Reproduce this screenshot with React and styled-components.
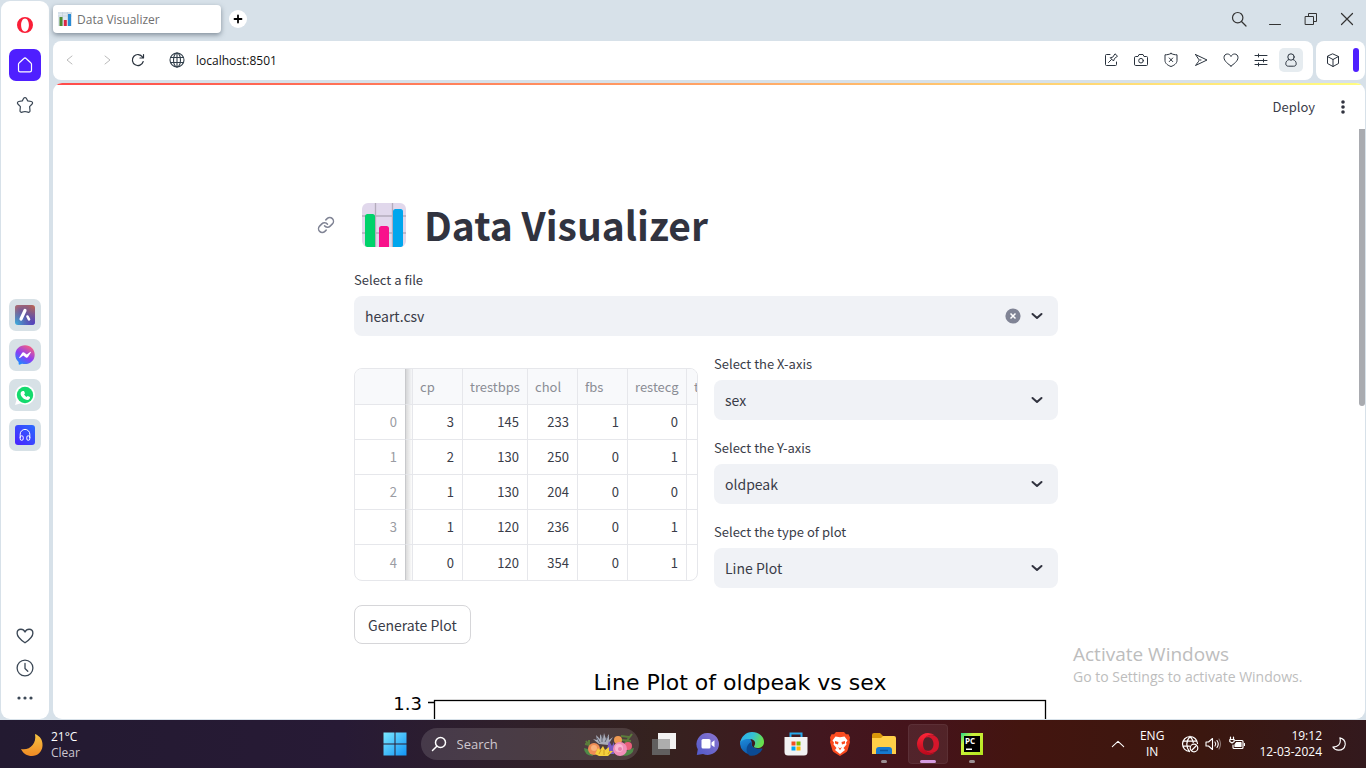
import React from "react";
import styled, { createGlobalStyle, css } from "styled-components";
import { FaFacebookMessenger } from "react-icons/fa";

const chromeFont = '"Open Sans", "Noto Sans", sans-serif';
const appFont = '"Noto Sans CJK JP", "Open Sans", sans-serif';

const GlobalStyle = createGlobalStyle`
  * { box-sizing: border-box; }
  body { margin: 0; overflow: hidden; font-family: ${chromeFont}; }
  button, input, select { font: inherit; color: inherit; margin: 0; padding: 0; border: 0; background: none; }
  svg { display: block; flex: none; }
`;

/* ---------- Desktop shell ---------- */
const Desktop = styled.div`
  height: 100vh;
  display: flex;
  flex-direction: column;
`;
const Browser = styled.div`
  flex: 1;
  min-height: 0;
  display: flex;
  gap: 4px;
  padding: 1px;
  background: #d7e1e9;
`;
const Sidebar = styled.nav`
  width: 48px;
  display: flex;
  flex-direction: column;
  justify-content: space-between;
  padding: 8px 0 11px;
  background: #fff;
  border-radius: 9px;
`;
const SideGroup = styled.div`
  display: flex;
  flex-direction: column;
  align-items: center;
  gap: 8px;
  padding-top: ${(p) => p.$top || 0}px;
`;
const SideButton = styled.button`
  width: 32px;
  height: ${(p) => p.$height || 32}px;
  display: grid;
  place-items: center;
  border-radius: 7px;
  color: #3c4856;
  background: ${(p) => p.$bg || "transparent"};
`;
const Main = styled.div`
  flex: 1;
  min-width: 0;
  display: flex;
  flex-direction: column;
`;
const TabBar = styled.div`
  height: 40px;
  display: flex;
  align-items: center;
  padding-bottom: 4px;
  gap: 8px;
`;
const Tab = styled.div`
  width: 168px;
  height: 28px;
  display: flex;
  align-items: center;
  gap: 5px;
  padding-left: 5px;
  background: #fff;
  border-radius: 4px;
  box-shadow: 0 2px 5px rgba(60, 75, 90, 0.55);
  font-size: 12px;
  color: #707070;
`;
const NewTab = styled.button`
  width: 18px;
  height: 18px;
  display: grid;
  place-items: center;
  border-radius: 50%;
  background: #fff;
`;
const WindowControls = styled.div`
  display: flex;
  margin-left: auto;
`;
const WindowButton = styled.button`
  width: 36px;
  height: 28px;
  display: grid;
  place-items: center;
  color: #333;
`;
const ToolRow = styled.div`
  display: flex;
  gap: 3px;
  height: 39px;
`;
const Toolbar = styled.div`
  flex: 1;
  display: flex;
  align-items: center;
  padding: 0 10px 1px 5px;
  background: #fff;
  border-radius: 8px;
`;
const CubeBox = styled.div`
  width: 49px;
  display: flex;
  align-items: center;
  gap: 8px;
  padding: 0 0 1px 5px;
  background: #fff;
  border-radius: 8px;
`;
const Accent = styled.span`
  width: 6px;
  height: 24px;
  border-radius: 3px;
  background: #4f1fff;
`;
const ToolButton = styled.button`
  width: ${(p) => p.$width || 24}px;
  height: 24px;
  display: grid;
  place-items: center;
  border-radius: 5px;
  color: ${(p) => (p.$muted ? "#bbb" : "#2a333e")};
  background: ${(p) => (p.$on ? "#e6ecf0" : "transparent")};
`;
const Address = styled.label`
  flex: 1;
  display: flex;
  align-items: center;
  gap: 11px;
  padding-left: 24px;
  color: #33404c;
`;
const AddressInput = styled.input`
  flex: 1;
  font-size: 12px;
  color: #111;
  outline: none;
`;
const Tools = styled.div`
  display: flex;
  gap: 6px;
`;

/* ---------- Web page ---------- */
const Page = styled.div`
  flex: 1;
  min-height: 0;
  margin-top: 3px;
  display: flex;
  flex-direction: column;
  position: relative;
  overflow: hidden;
  background: #fff;
  border-radius: 9px;
  font-family: ${appFont};
  color: #3a3c48;
`;
const Decoration = styled.div`
  flex: none;
  height: 2px;
  background: linear-gradient(90deg, #ff4b4b, #fffd80);
`;
const AppHeader = styled.header`
  flex: none;
  height: 44px;
  display: flex;
  align-items: center;
  justify-content: flex-end;
  gap: 19px;
  padding-right: 13px;
`;
const DeployButton = styled.button`
  font-size: 13px;
  line-height: 20px;
  padding-bottom: 1px;
`;
const ScrollArea = styled.div`
  flex: 1;
  min-height: 0;
  display: flex;
  overflow: hidden;
`;
const ScrollThumb = styled.div`
  flex: none;
  width: 6px;
  height: 47%;
  background: #a9abb0;
  border-radius: 0 0 3px 3px;
`;
const Content = styled.main`
  flex: 1;
  min-width: 0;
`;
const Block = styled.div`
  max-width: 704px;
  margin: 0 auto;
  padding-top: 68px;
`;
const TitleRow = styled.div`
  display: flex;
  align-items: center;
  height: 56px;
  margin: 0 0 17px -37px;
`;
const AnchorLink = styled.a`
  color: #808495;
  margin-right: 27px;
`;
const Title = styled.h1`
  margin: 0 0 0 18px;
  padding-bottom: 2px;
  font-size: 39px;
  line-height: 56px;
  font-weight: 700;
  white-space: nowrap;
  color: #31333f;
`;
const Field = styled.div`
  display: flex;
  flex-direction: column;
  gap: 6px;
`;
const FieldLabel = styled.label`
  font-size: 13px;
  line-height: 20px;
`;
const SelectBox = styled.div`
  display: grid;
  align-items: center;
  height: 40px;
  background: #f0f2f6;
  border-radius: 8px;
  & > * { grid-area: 1 / 1; }
`;
const Select = styled.select`
  appearance: none;
  width: 100%;
  height: 40px;
  padding: 0 60px 0 11px;
  font-size: 14px;
  outline: none;
`;
const SelectIcons = styled.div`
  justify-self: end;
  display: flex;
  align-items: center;
  gap: 8px;
  padding-right: 13px;
  pointer-events: none;
`;
const ClearButton = styled.button`
  pointer-events: auto;
`;
const Columns = styled.div`
  display: grid;
  grid-template-columns: 1fr 1fr;
  gap: 16px;
  margin-top: 18px;
`;
const FieldStack = styled.div`
  display: flex;
  flex-direction: column;
  gap: 18px;
`;
const TableFrame = styled.div`
  margin-top: 14px;
  align-self: start;
  overflow: hidden;
  border: 1px solid #e6e7eb;
  border-radius: 8px;
`;
const Table = styled.table`
  table-layout: fixed;
  width: 100%;
  border-collapse: separate;
  border-spacing: 0;
  font-size: 13px;
`;
const cell = css`
  height: 35px;
  padding: 0 8px 0 7px;
  border-right: 1px solid #e6e7eb;
  font-weight: 400;
  line-height: 20px;
  &:last-child { border-right: 0; padding-right: 0; }
`;
const HeadCell = styled.th`
  ${cell}
  height: 36px;
  overflow: hidden;
  white-space: nowrap;
  text-align: left;
  color: #8b8d95;
  background: #f8f9fb;
  border-bottom: 1px solid #e6e7eb;
`;
const Cell = styled.td`
  ${cell}
  text-align: right;
  border-bottom: 1px solid #e6e7eb;
  tr:last-child > & { border-bottom: 0; }
`;
const IndexCell = styled.th`
  ${cell}
  text-align: right;
  color: #9a9ca3;
  border-right-color: #c8c9cc;
  border-bottom: 1px solid #e6e7eb;
  tr:last-child > & { border-bottom: 0; }
`;
const CornerCell = styled(HeadCell)`
  border-right-color: #c8c9cc;
`;
const shade = css`
  padding: 0;
  background-image: linear-gradient(90deg, rgba(0, 0, 0, 0.14), rgba(0, 0, 0, 0.01));
`;
const ShadeHead = styled(HeadCell)`${shade}`;
const ShadeCell = styled(Cell)`${shade}`;
const PlotButton = styled.button`
  display: block;
  height: 39px;
  margin: 17px 0 16px;
  padding: 0 13px;
  border: 1px solid #d6d6d9;
  border-radius: 8px;
  background: #fff;
  font-size: 14px;
`;
const Watermark = styled.div`
  position: absolute;
  left: calc(100% - 292px);
  bottom: 32px;
  font-family: ${chromeFont};
  color: #bdbdbd;
  white-space: nowrap;
`;
const WatermarkTitle = styled.div`
  font-size: 19px;
  line-height: 26px;
`;
const WatermarkText = styled.div`
  font-size: 14px;
  line-height: 20px;
`;

/* ---------- Taskbar ---------- */
const Taskbar = styled.footer`
  flex: none;
  height: 48px;
  display: grid;
  grid-template-columns: 1fr auto 1fr;
  align-items: center;
  color: #fff;
  font-size: 12px;
  line-height: 16px;
  background: linear-gradient(90deg, #231a31 0%, #271a35 25%, #30202a 38%, #35221f 48%, #42171f 60%, #45131a 68%, #43150f 75%, #3b170f 88%, #33191d 100%);
`;
const Weather = styled.button`
  justify-self: start;
  display: flex;
  align-items: center;
  gap: 7px;
  padding: 2px 0 0 20px;
  text-align: left;
`;
const Muted = styled.div`
  color: #ccc6d0;
`;
const Apps = styled.div`
  display: flex;
  align-items: center;
  gap: 4px;
`;
const AppButton = styled.button`
  width: 40px;
  height: 40px;
  display: grid;
  place-items: center;
  position: relative;
  border-radius: 4px;
  background: ${(p) => (p.$active ? "rgba(255,255,255,.07)" : "transparent")};
  box-shadow: ${(p) => (p.$active ? "inset 0 0 0 1px rgba(255,255,255,.06)" : "none")};
`;
const Running = styled.span`
  position: absolute;
  bottom: 1px;
  left: calc(50% - ${(p) => (p.$active ? 8 : 3)}px);
  width: ${(p) => (p.$active ? 16 : 6)}px;
  height: 3px;
  border-radius: 2px;
  background: ${(p) => (p.$active ? "#d69be0" : "#9b8f93")};
`;
const SearchPill = styled.label`
  width: 218px;
  height: 32px;
  display: flex;
  align-items: center;
  gap: 10px;
  margin: 0 1px 0 2px;
  padding: 0 4px 0 10px;
  border-radius: 16px;
  background: rgba(255, 255, 255, 0.13);
`;
const SearchInput = styled.input`
  flex: 1;
  min-width: 0;
  font-size: 13px;
  outline: none;
  &::placeholder { color: #d0c8cf; opacity: 1; }
`;
const Tray = styled.div`
  justify-self: end;
  display: flex;
  align-items: center;
  padding-right: 20px;
`;
const TrayItem = styled.button`
  margin-left: ${(p) => p.$gap}px;
  text-align: ${(p) => p.$align || "center"};
`;

/* ---------- Icons ---------- */
const Line = ({ size = 16, w = 1, box = 16, children }) => (
  <svg width={size} height={size} viewBox={`0 0 ${box} ${box}`} fill="none" stroke="currentColor" strokeWidth={w} strokeLinecap="round" strokeLinejoin="round" aria-hidden="true">
    {children}
  </svg>
);
const OperaSmall = () => (
  <svg width="18" height="18" viewBox="0 0 18 18">
    <path fillRule="evenodd" fill="#fa1e37" d="M9 1a8 8 0 1 0 0 16A8 8 0 0 0 9 1Zm0 1.400c2.300 0 3.900 2.900 3.900 6.600S11.300 15.600 9 15.600 5.100 12.700 5.100 9 6.700 2.400 9 2.400Z" />
  </svg>
);
const HomeIcon = () => <Line size={18} box={18} w={1.2}><path d="M2.500 8.300c0-.7.300-1.200.8-1.600l4.300-4c.8-.8 2-.8 2.800 0l4.300 4c.5.4.8.9.8 1.600v6c0 1-.7 1.600-1.600 1.600H4.100c-1 0-1.600-.6-1.600-1.600Z" stroke="#fff" /></Line>;
const StarIcon = () => <Line size={18} box={18} w={1.2}><path d="M7.700 2.300c.6-1 2-1 2.600 0l1.400 2.600 3.600.6c1.200.2 1.700 1.600.8 2.500L13.600 10.600l.4 4c.1 1.300-1 2-2.100 1.500L9 15.500l-2.900.6C5 16.600 3.900 15.900 4 14.600l.4-4L1.900 8c-.9-.9-.4-2.300.8-2.500l3.600-.6Z" /></Line>;
const HeartPath = "M8 14C5.500 12.300 1 9.100 1 5.500 1 3.300 2.600 2 4.400 2 6 2 7.300 3 8 4.500 8.700 3 10 2 11.600 2 13.400 2 15 3.300 15 5.500c0 3.600-4.500 6.800-7 8.500Z";
const ClockIcon = () => <Line size={18} box={18} w={1.3}><circle cx="9" cy="9" r="7.900" /><path d="M9 4.500V9.500l2.800 2.800" /></Line>;
const DotsIcon = () => <svg width="18" height="6" viewBox="0 0 18 6" fill="#3c4856"><circle cx="3" cy="3" r="1.600" /><circle cx="9" cy="3" r="1.600" /><circle cx="15" cy="3" r="1.600" /></svg>;
const AriaIcon = () => (
  <svg width="20" height="20" viewBox="0 0 20 20">
    <defs><linearGradient id="aria" x1="0" y1="1" x2="1" y2="0"><stop offset="0" stopColor="#35c0e5" /><stop offset=".5" stopColor="#5a55a8" /><stop offset="1" stopColor="#d0683f" /></linearGradient>
      <linearGradient id="aria2" x1="0" y1="0" x2="1" y2="1"><stop offset="0" stopColor="#e87a45" stopOpacity=".7" /><stop offset=".5" stopColor="#6a55a8" stopOpacity=".1" /><stop offset="1" stopColor="#4f35c9" stopOpacity=".8" /></linearGradient></defs>
    <rect width="20" height="20" rx="3" fill="url(#aria)" /><rect width="20" height="20" rx="3" fill="url(#aria2)" />
    <path d="M10 5.500 6 14" stroke="#fff" strokeWidth="3.200" strokeLinecap="round" /><path d="m12.500 11.500 1.500 2.800" stroke="#fff" strokeWidth="2.600" strokeLinecap="round" />
  </svg>
);
const MessengerIcon = () => (
  <svg width="20" height="20" viewBox="0 0 20 20">
    <defs><linearGradient id="msgr" x1=".2" y1="1" x2=".8" y2="0"><stop offset="0" stopColor="#1292ff" /><stop offset=".45" stopColor="#8a3df5" /><stop offset="1" stopColor="#ff6278" /></linearGradient></defs>
    <circle cx="10" cy="10" r="8" fill="#fff" />
    <FaFacebookMessenger size={20} fill="url(#msgr)" />
  </svg>
);
const WhatsAppIcon = () => (
  <svg width="20" height="20" viewBox="0 0 20 20">
    <path d="M10 0a10 9.900 0 0 0-8.500 15L0 20l5.200-1.400A10 9.900 0 1 0 10 0Z" fill="#fff" />
    <circle cx="10" cy="10" r="8.200" fill="#14da6d" />
    <g transform="translate(5.500 5.500)"><path d="M2.500.4 3.500.5l1 2.300-.9 1.300c.5 1 1.300 1.800 2.400 2.400l1.200-1 2.300 1c.2 1.800-1 2.900-2.500 2.900C3.500 9.200.1 5.900.1 2.900.1 1.600 1.200.5 2.500.4Z" fill="#fff" /></g>
  </svg>
);
const PlayerIcon = () => (
  <svg width="20" height="20" viewBox="0 0 20 20" fill="none" stroke="#fff" strokeWidth="1">
    <defs><linearGradient id="player" x1="0" y1="1" x2="1" y2="0"><stop offset="0" stopColor="#4b22ff" /><stop offset="1" stopColor="#2b6cff" /></linearGradient></defs>
    <rect width="20" height="20" rx="3" fill="url(#player)" stroke="none" />
    <path d="M5.200 13V9.200a4.800 4.800 0 0 1 9.600 0V13" /><rect x="5.200" y="10.800" width="3" height="4.500" rx="1.400" /><rect x="11.800" y="10.800" width="3" height="4.500" rx="1.400" />
  </svg>
);
const Favicon = () => (
  <svg width="14" height="14" viewBox="0 0 14 14"><path fill="#dfe8ef" d="M0 0h14v14H0z" /><path d="M0 1h14M0 4h14M4.500 0v14M9.500 0v14" stroke="#bccbd6" strokeWidth=".6" /><path fill="#4d8b31" d="M1.500 5h3v9h-3z" /><path fill="#dc2744" d="M5.800 8h3v6h-3z" /><path fill="#2a8bd5" d="M10 2h3v12h-3z" /></svg>
);
const GlobeIcon = () => <Line w={1.100}><circle cx="8" cy="8" r="7" /><ellipse cx="8" cy="8" rx="3.500" ry="7" /><path d="M1.500 5.500h13M1.500 10.500h13M8 1v14" /></Line>;
const ChartEmoji = () => (
  <svg width="44" height="44" viewBox="0 0 44 44">
    <rect width="44" height="44" rx="6" fill="#e1d8ec" />
    <path d="M0 13h44M0 30h44M13.500 0v44M30.500 0v44" stroke="#b4acbc" strokeWidth="1.300" />
    <path fill="#00d26a" d="M3 13.500Q3 11 5.500 11h5q2.500 0 2.500 2.500V44H5.500Q3 44 3 41.500Z" />
    <path fill="#f8128b" d="M17 25.500Q17 23 19.500 23h5q2.500 0 2.500 2.500V44H17Z" />
    <path fill="#00a6ed" d="M31 8.500Q31 6 33.500 6h5Q41 6 41 8.500v33Q41 44 38.500 44H31Z" />
  </svg>
);
const LinkIcon = () => (
  <svg width="18" height="18" viewBox="0 0 24 24" fill="none" stroke="currentColor" strokeWidth="2" strokeLinecap="round" strokeLinejoin="round"><path d="M10 13a5 5 0 0 0 7.540.54l3-3a5 5 0 0 0-7.070-7.070l-1.720 1.710" /><path d="M14 11a5 5 0 0 0-7.540-.54l-3 3a5 5 0 0 0 7.070 7.070l1.710-1.710" /></svg>
);
const Chevron = () => <svg width="16" height="16" viewBox="0 0 16 16" fill="none" stroke="#31333f" strokeWidth="2"><path d="M3.500 6 8 10l4.500-4" strokeLinecap="round" strokeLinejoin="round" /></svg>;
const ClearIcon = () => <svg width="16" height="16" viewBox="0 0 16 16"><circle cx="8" cy="8" r="7.600" fill="#808495" /><path d="m5.500 5.500 5 5m0-5-5 5" stroke="#fff" strokeWidth="1.500" /></svg>;
const BloomIcon = () => (
  <svg width="52" height="26" viewBox="0 0 52 26">
    <g stroke="#5b7d3b" strokeWidth="2" fill="none"><path d="M10 20 3 10M2 13l5 1M6 9l0 5M42 12l7-9M38 5l8 1M39 9l9 1" /></g>
    <path d="M1 17q8 1 9 8Q1 24 1 17ZM51 17q-8 1-11 8 10 0 11-8Z" fill="#4e8a48" />
    <path d="m16 13-6-5 4 1-1-5 4 4 0-5 3 5 1-6 2 6 3-5 0 6 4-3-5 8Z" fill="#a9adba" /><path d="m17 12-3-5m5 4 0-7m3 7 3-6" stroke="#5f6473" />
    <circle cx="35" cy="9" r="4" fill="#ef9a52" /><circle cx="11" cy="18" r="6" fill="#ee8c56" /><circle cx="11" cy="17" r="3" fill="#f7b07c" />
    <path d="m24 18 2-8 3 5 2-4 0 12-6 0Z" fill="#7a5cc4" />
    <circle cx="45" cy="15" r="4" fill="#e8607c" /><circle cx="37" cy="18" r="7" fill="#f08fb8" /><circle cx="36" cy="17" r="4" fill="#f8b5d1" /><circle cx="37" cy="18" r="2" fill="#e77aa8" />
    <path d="m12 23 3-6 2 2 3-4 2 4 4-3 0 4 4 0-5 5H16Z" fill="#f5cf3c" /><path d="m16 23 2-4m3 5 0-5m4 4 2-3" stroke="#cf9e20" />
  </svg>
);
const StartIcon = () => (
  <svg width="24" height="24" viewBox="0 0 24 24"><defs><linearGradient id="win" x1="0" y1="0" x2="1" y2="1"><stop offset="0" stopColor="#7be9ff" /><stop offset="1" stopColor="#1193f5" /></linearGradient></defs><path fill="url(#win)" d="M.5.500h11v11H.5zM12.500.500h11v11h-11zM.5 12.500h11v11H.5zM12.500 12.500h11v11h-11z" /></svg>
);
const TaskViewIcon = () => <svg width="24" height="24" viewBox="0 0 24 24"><path d="M6 1h18v16H6z" fill="#f2f2f2" /><path d="M0 7h18v16H0z" fill="#666" fillOpacity=".9" /><path d="M6 7h12v10H6z" fill="#adadad" /></svg>;
const ChatIcon = () => (
  <svg width="24" height="24" viewBox="0 0 24 24"><defs><linearGradient id="chat" x1="1" y1="0" x2="0" y2="1"><stop offset="0" stopColor="#8c76cf" /><stop offset="1" stopColor="#5059c9" /></linearGradient></defs><path fill="url(#chat)" d="M12 1a11.300 11 0 1 1-5 21L.8 23l1-5.800A11 11 0 0 1 12 1Z" /><rect x="5.500" y="7" width="9" height="9.500" rx="1.500" fill="#fff" /><path d="m15.500 10.500 3-2.300v7l-3-2.300Z" fill="#fff" /></svg>
);
const EdgeIcon = () => (
  <svg width="24" height="24" viewBox="0 0 24 24">
    <defs><linearGradient id="edgeA" x1="0" y1="0" x2="1" y2=".3"><stop offset="0" stopColor="#2aaaf0" /><stop offset=".55" stopColor="#35c1d5" /><stop offset="1" stopColor="#67e04d" /></linearGradient><linearGradient id="edgeB" x1="0" y1="0" x2=".5" y2="1"><stop offset="0" stopColor="#1f8fe0" /><stop offset="1" stopColor="#0c55a5" /></linearGradient></defs>
    <path fill="url(#edgeB)" d="M0 12C0 7 5 4.500 10 6l2 4.500c-1 4 2 7.500 10.500 6A12 12 0 0 1 0 12Z" />
    <path fill="#0b4a94" d="M9.500 23.500C5 20 5.500 12.500 12 9.500c-2 4.500 1 8.500 10.500 7.500A12 12 0 0 1 9.500 23.500Z" />
    <path fill="url(#edgeA)" d="M0 11.500C1 4.500 6 0 12 0c7 0 12 4.500 12 10 0 4-3 6-6.500 6-3 0-4-1-3.300-2 1.800-2.400 1.300-6.500-4.200-7C5 6.500 1 8 0 11.500Z" />
  </svg>
);
const StoreIcon = () => <svg width="24" height="24" viewBox="0 0 24 24"><path d="M6.500 7V1.500h11V7" fill="none" stroke="#27a8ea" strokeWidth="2" /><path d="M.5 5h23v15q0 3.500-3.500 3.500H4q-3.500 0-3.500-3.500Z" fill="#f2f2f2" /><path fill="#f25022" d="M7.500 9.500h4v4h-4z" /><path fill="#7fba00" d="M12.500 9.500h4v4h-4z" /><path fill="#00a4ef" d="M7.500 14.500h4v4h-4z" /><path fill="#ffb900" d="M12.500 14.500h4v4h-4z" /></svg>;
const BraveIcon = () => (
  <svg width="24" height="24" viewBox="0 0 24 24">
    <path d="M8 0h8l2 2.200 2.500 0L22 5.500 21.500 8 22 10l-2.300 8q-.5 1.500-2 2.500L12 24l-5.700-3.500q-1.500-1-2-2.500L2 10l.5-2L2 5.500 3.500 2.200l2.500 0Z" fill="#fb4b20" />
    <path d="m7.500 4.500 4.500.8 4.500-.8 3 4-1.500 2 .5 2-3 3.500L17 18l-5 4-5-4 1.500-2-3-3.500.5-2-1.500-2Z" fill="#fff" />
    <path d="m7 9 3.500 1-.5 2.500-3-1Zm10 0-3.500 1 .5 2.500 3-1ZM10 15l2 1.200 2-1.200-2 3.300Z" fill="#fb4b20" />
  </svg>
);
const FolderIcon = () => <svg width="24" height="24" viewBox="0 0 24 24"><path d="M0 3q0-2 2-2h6l3 3v5H0Z" fill="#d9970a" /><path d="M0 6h9l2-2h11q2 0 2 2v16H0Z" fill="#ffcf48" /><path d="M4 22v-4q0-3 3-3h10q3 0 3 3v4Z" fill="#1679cf" /><path d="M8 18.500h8" stroke="#0b559f" strokeWidth="1.500" /></svg>;
const OperaIcon = () => (
  <svg width="24" height="24" viewBox="0 0 24 24"><defs><linearGradient id="opera" x1="0" y1="0" x2="0" y2="1"><stop offset="0" stopColor="#ff2638" /><stop offset="1" stopColor="#b8081b" /></linearGradient></defs><path d="M8 6.500C12 1.500 19 2 22 7q2 5 0 10c-3 5-10 5.500-14 .5 4 3 9.500 1 9.500-5.500S12 3.500 8 6.500Z" fill="#d5162b" /><path fillRule="evenodd" fill="url(#opera)" d="M12 1a11 11 0 1 0 7 19.500C12.500 23 7 18.500 7 12s5.500-11 12-8.500A11 11 0 0 0 12 1Z" /></svg>
);
const PyCharmIcon = () => (
  <svg width="22" height="22" viewBox="0 0 22 22"><defs><linearGradient id="pc" x1="0" y1="0" x2="1" y2="1"><stop offset="0" stopColor="#21d789" /><stop offset=".3" stopColor="#cdf13c" /><stop offset="1" stopColor="#b4e61e" /></linearGradient></defs><path fill="url(#pc)" d="M0 0h22v22H0z" /><path d="M3 3h16v16H3z" fill="#000" /><text x="4" y="11" fontSize="8" fontWeight="700" fontFamily="Open Sans" fill="#fff">PC</text><path d="M5 15.500h6v1.500H5z" fill="#fff" /></svg>
);
const WeatherMoon = () => <svg width="24" height="24" viewBox="0 0 24 24"><defs><linearGradient id="moon" x1="0" y1="0" x2="0" y2="1"><stop offset="0" stopColor="#f7c443" /><stop offset="1" stopColor="#f08a24" /></linearGradient></defs><path d="M15 1c5 2 8 6 7.500 12C22 19 17.500 23 12 23c-5 0-9-2.500-11-7 8 2 16-5 14-15Z" fill="url(#moon)" /></svg>;

/* ---------- Data ---------- */
const columns = ["cp", "trestbps", "chol", "fbs", "restecg", "thalach"];
const widths = [51, 7, 50, 65, 50, 50, 59, undefined];
const rows = [
  [3, 145, 233, 1, 0],
  [2, 130, 250, 0, 1],
  [1, 130, 204, 0, 0],
  [1, 120, 236, 0, 1],
  [0, 120, 354, 0, 1],
];

function SelectField({ id, label, value, clearable }) {
  return (
    <Field>
      <FieldLabel htmlFor={id}>{label}</FieldLabel>
      <SelectBox>
        <Select id={id} defaultValue={value}><option>{value}</option></Select>
        <SelectIcons>
          {clearable && <ClearButton aria-label="Clear value"><ClearIcon /></ClearButton>}
          <Chevron />
        </SelectIcons>
      </SelectBox>
    </Field>
  );
}

function DataTable() {
  return (
    <TableFrame>
      <Table>
        <colgroup>{widths.map((w, i) => <col key={i} width={w} />)}</colgroup>
        <thead>
          <tr>
            <CornerCell />
            <ShadeHead />
            {columns.map((c) => <HeadCell key={c} scope="col">{c}</HeadCell>)}
          </tr>
        </thead>
        <tbody>
          {rows.map((r, i) => (
            <tr key={i}>
              <IndexCell scope="row">{i}</IndexCell>
              <ShadeCell />
              {r.map((v, j) => <Cell key={j}>{v}</Cell>)}
              <Cell />
            </tr>
          ))}
        </tbody>
      </Table>
    </TableFrame>
  );
}

const Plot = () => (
  <svg width="100%" viewBox="0 0 704 528" fontFamily="DejaVu Sans" fill="#000">
    <text x="386" y="30" fontSize="22" textAnchor="middle">Line Plot of oldpeak vs sex</text>
    <text x="68" y="50" fontSize="18" textAnchor="end">1.3</text>
    <path d="M74 42.500h6" stroke="#000" strokeWidth="1.500" />
    <rect x="80.500" y="40.500" width="611" height="430" fill="none" stroke="#000" strokeWidth="1.300" />
  </svg>
);

export default function App() {
  return (
    <Desktop>
      <GlobalStyle />
      <Browser>
        <Sidebar>
          <SideGroup>
            <SideButton aria-label="Opera menu"><OperaSmall /></SideButton>
            <SideButton aria-label="Home" $bg="#4f1fff"><HomeIcon /></SideButton>
            <SideButton aria-label="Bookmarks"><StarIcon /></SideButton>
          </SideGroup>
          <SideGroup $top={5}>
            <SideButton aria-label="Aria" $bg="#d7e1e6"><AriaIcon /></SideButton>
            <SideButton aria-label="Messenger" $bg="#d7e1e6"><MessengerIcon /></SideButton>
            <SideButton aria-label="WhatsApp" $bg="#d7e1e6"><WhatsAppIcon /></SideButton>
            <SideButton aria-label="Player" $bg="#d7e1e6"><PlayerIcon /></SideButton>
          </SideGroup>
          <SideGroup>
            <SideButton $height={24} aria-label="Favourites"><Line size={18} w={1.200}><path d={HeartPath} /></Line></SideButton>
            <SideButton $height={24} aria-label="History"><ClockIcon /></SideButton>
            <SideButton $height={20} aria-label="More"><DotsIcon /></SideButton>
          </SideGroup>
        </Sidebar>
        <Main>
          <TabBar>
            <Tab><Favicon />Data Visualizer</Tab>
            <NewTab aria-label="New tab"><Line size={10} box={10} w={1.800}><path d="M5 1.500v7M1.500 5h7" /></Line></NewTab>
            <WindowControls>
              <WindowButton aria-label="Search tabs"><Line w={1.200}><circle cx="6.700" cy="6.700" r="5.200" /><path d="m10.500 10.500 4.500 4.500" /></Line></WindowButton>
              <WindowButton aria-label="Minimize"><Line><path d="M2.500 13.500h11" /></Line></WindowButton>
              <WindowButton aria-label="Restore"><Line><path d="M2.500 5.500h8v8h-8zM5.500 5.500v-3h8v8h-3" /></Line></WindowButton>
              <WindowButton aria-label="Close"><Line w={1.200}><path d="m2.500 2.500 11 11m0-11-11 11" /></Line></WindowButton>
            </WindowControls>
          </TabBar>
          <ToolRow>
            <Toolbar>
              <ToolButton $muted aria-label="Back"><Line><path d="m10 4-5 4 5 4" /></Line></ToolButton>
              <ToolButton $muted $width={49} aria-label="Forward"><Line><path d="m6 4 5 4-5 4" /></Line></ToolButton>
              <ToolButton $width={14} aria-label="Reload"><Line size={14} w={1.200} box={14}><path d="M12.200 8.500A5.500 5.500 0 1 1 11.500 4M12.500 1.500V5H9" /></Line></ToolButton>
              <Address>
                <GlobeIcon />
                <AddressInput aria-label="Address" defaultValue="localhost:8501" />
              </Address>
              <Tools>
                <ToolButton aria-label="Edit page"><Line><path d="M7 2.500H3.500q-1 0-1 1v9q0 1 1 1h9q1 0 1-1V10M5.500 10.500l3-3M7.500 6 10.500 9l1-2.500L14.500 4.200 12 1.800 10 4.800Z" /></Line></ToolButton>
                <ToolButton aria-label="Snapshot"><Line><path d="M1.500 5.500q0-1 1-1H5L6 2.500h4l1 2h2.500q1 0 1 1v7q0 1-1 1h-11q-1 0-1-1Z" /><circle cx="8" cy="8.700" r="2.300" /></Line></ToolButton>
                <ToolButton aria-label="Ad blocker"><Line><path d="M8 1.500c2 1 4 1.300 6 1.300v5.700c0 3-3 5-6 6-3-1-6-3-6-6V2.800c2 0 4-.3 6-1.300ZM6.300 6l3.400 3.600m0-3.600L6.300 9.600" /></Line></ToolButton>
                <ToolButton aria-label="Flow"><Line><path d="M2.500 2.500 14 8 2.500 13.500 5.500 9.500M2.500 2.500l3 4.500M5.500 8H8" /></Line></ToolButton>
                <ToolButton aria-label="Favourite"><Line><path d={HeartPath} /></Line></ToolButton>
                <ToolButton aria-label="Setup"><Line><path d="M2 3.500h12M2 8.500h12M2 12.500h12M5.500 2v3M10.500 7v3M5.500 11v3" /></Line></ToolButton>
                <ToolButton $on aria-label="Profile"><Line><circle cx="8" cy="5" r="3.200" /><path d="M5.600 7.700C3.800 8.300 2.800 9.800 2.800 11.800c0 1.600 1 2.400 2.500 2.400h5.400c1.500 0 2.500-.8 2.500-2.400 0-2-1-3.500-2.800-4.100" /></Line></ToolButton>
              </Tools>
            </Toolbar>
            <CubeBox>
              <ToolButton aria-label="Extensions"><Line><path d="M8 2 13.500 4.500v7L8 14.500l-5.500-3v-7ZM2.500 4.500 8 7.500l5.500-3M8 7.500v7" /></Line></ToolButton>
              <Accent />
            </CubeBox>
          </ToolRow>
          <Page>
            <Decoration />
            <AppHeader>
              <DeployButton>Deploy</DeployButton>
              <button aria-label="Main menu"><svg width="18" height="18" viewBox="0 0 18 18" fill="#31333f"><circle cx="9" cy="4" r="1.800" /><circle cx="9" cy="9" r="1.800" /><circle cx="9" cy="14" r="1.800" /></svg></button>
            </AppHeader>
            <ScrollArea>
              <Content>
                <Block>
                  <TitleRow>
                    <AnchorLink href="#data-visualizer" aria-label="Link to heading"><LinkIcon /></AnchorLink>
                    <ChartEmoji />
                    <Title id="data-visualizer">Data Visualizer</Title>
                  </TitleRow>
                  <SelectField id="file" label="Select a file" value="heart.csv" clearable />
                  <Columns>
                    <DataTable />
                    <FieldStack>
                      <SelectField id="x" label="Select the X-axis" value="sex" />
                      <SelectField id="y" label="Select the Y-axis" value="oldpeak" />
                      <SelectField id="plot" label="Select the type of plot" value="Line Plot" />
                    </FieldStack>
                  </Columns>
                  <PlotButton>Generate Plot</PlotButton>
                  <Plot />
                </Block>
              </Content>
              <ScrollThumb />
            </ScrollArea>
            <Watermark>
              <WatermarkTitle>Activate Windows</WatermarkTitle>
              <WatermarkText>Go to Settings to activate Windows.</WatermarkText>
            </Watermark>
          </Page>
        </Main>
      </Browser>
      <Taskbar>
        <Weather><WeatherMoon /><div>21°C<Muted>Clear</Muted></div></Weather>
        <Apps>
          <AppButton aria-label="Start"><StartIcon /></AppButton>
          <SearchPill>
            <Line w={1.500}><circle cx="9.500" cy="6.500" r="5" /><path d="m5.800 10.200-4.300 4.300" /></Line>
            <SearchInput placeholder="Search" aria-label="Search" />
            <BloomIcon />
          </SearchPill>
          <AppButton aria-label="Task view"><TaskViewIcon /></AppButton>
          <AppButton aria-label="Chat"><ChatIcon /></AppButton>
          <AppButton aria-label="Edge"><EdgeIcon /></AppButton>
          <AppButton aria-label="Store"><StoreIcon /></AppButton>
          <AppButton aria-label="Brave"><BraveIcon /></AppButton>
          <AppButton aria-label="File Explorer"><FolderIcon /><Running /></AppButton>
          <AppButton aria-label="Opera" $active><OperaIcon /><Running $active /></AppButton>
          <AppButton aria-label="PyCharm"><PyCharmIcon /><Running /></AppButton>
        </Apps>
        <Tray>
          <TrayItem aria-label="Hidden icons"><Line size={14} w={1.200}><path d="m1.500 11 6.500-6 6.500 6" /></Line></TrayItem>
          <TrayItem $gap={15}>ENG<br />IN</TrayItem>
          <TrayItem $gap={17} aria-label="Network"><Line size={18} box={18} w={1.200}><path d="M8.500 16.500A7.500 7.500 0 1 1 16.500 8.500M9 1.500C4.800 6 4.800 12 8.500 16.500M9 1.500c2 2 3 4 3.200 6M2 6.200h14M2 11.200h6.500" /><circle cx="13" cy="13" r="3.800" /><path d="m10.500 15.500 5-5" /></Line></TrayItem>
          <TrayItem $gap={6} aria-label="Volume"><Line w={1.100}><path d="M1 6h2.500L7.500 2.500v11L3.500 10H1ZM10 6q1.500 2 0 4M12 4.500q2.500 3.500 0 7" /><path d="M14 3q3 5 0 10" opacity=".4" /></Line></TrayItem>
          <TrayItem $gap={8} aria-label="Battery"><Line w={1.200}><path d="M6.500 4.500h6.500q1 0 1 1v6q0 1-1 1H5q-1 0-1-1V9M15.500 7.500v2M1.500 1v2M4.500 1v2M.800 3.500h4.400v2L3 7 .800 5.500Z" /><path d="M7.500 6.500h4.500v4H6v-2Z" fill="currentColor" /></Line></TrayItem>
          <TrayItem $gap={14} $align="right">19:12<br />12-03-2024</TrayItem>
          <TrayItem $gap={10} aria-label="Focus"><Line size={14} w={1.300}><path d="M9 1c4 1 6.500 4 6 8-.6 4-4 6-7.500 6-2.800 0-5-1-6.500-3.500C6.500 11.500 11 8 9 1Z" /></Line></TrayItem>
        </Tray>
      </Taskbar>
    </Desktop>
  );
}
